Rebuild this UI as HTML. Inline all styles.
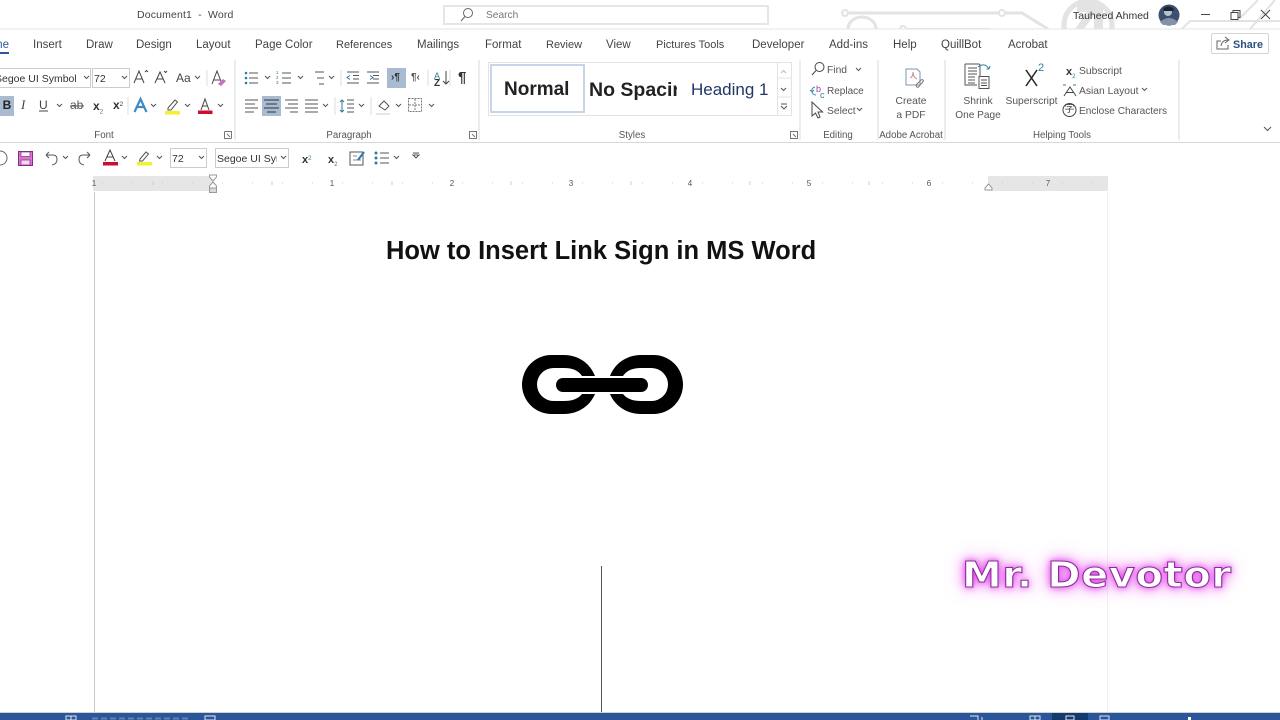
<!DOCTYPE html>
<html><head><meta charset="utf-8"><title>Document1 - Word</title>
<style>
html,body{margin:0;padding:0;width:1280px;height:720px;overflow:hidden;background:#fff;font-family:"Liberation Sans",sans-serif}
.t{position:absolute;white-space:nowrap;font-size:11.500px;line-height:14px;color:#444}
.s{font-size:10.300px;color:#555}
.l{font-size:9.700px;top:128.500px}
.c{transform:translateX(-50%)}
.b{position:absolute;box-sizing:border-box}
svg{position:absolute;left:0;top:0}
</style></head><body>
<!-- backgrounds -->
<div class="b" style="left:0;top:96px;width:14px;height:20px;background:#a9bbd0"></div>
<div class="b" style="left:387px;top:68px;width:19px;height:20px;background:#a9bbd0"></div>
<div class="b" style="left:262px;top:96px;width:19px;height:20px;background:#a9bbd0"></div>
<div class="b" style="left:-6px;top:68px;width:97px;height:20px;border:1px solid #ccc"></div>
<div class="b" style="left:92px;top:68px;width:38px;height:20px;border:1px solid #ccc"></div>
<div class="b" style="left:170px;top:148px;width:37px;height:20px;border:1px solid #ccc"></div>
<div class="b" style="left:215px;top:148px;width:74px;height:20px;border:1px solid #ccc"></div>
<div class="b" style="left:443px;top:5px;width:326px;height:20px;border:2px solid #e6e6e6"></div>
<div class="b" style="left:488px;top:62px;width:304px;height:54px;border:1px solid #e3e3e3"></div>
<div class="b" style="left:490px;top:64px;width:95px;height:49px;border:2.500px solid #c6d6e8"></div>
<div class="b" style="left:777px;top:62px;width:15px;height:54px;border-left:1px solid #e3e3e3"></div>
<div class="b" style="left:1211px;top:33px;width:58px;height:21px;border:1px solid #d4d4d4;border-radius:2px"></div>
<div class="b" style="left:93px;top:176px;width:1015px;height:15px;background:#fff"></div>
<div class="b" style="left:93px;top:176px;width:120px;height:15px;background:#e6e6e6"></div>
<div class="b" style="left:988px;top:176px;width:120px;height:15px;background:#e6e6e6"></div>
<div class="b" style="left:94px;top:192px;width:1px;height:521px;background:#c8c8c8"></div>
<div class="b" style="left:1107px;top:192px;width:1px;height:521px;background:#f0f0f0"></div>
<div class="b" style="left:601px;top:566px;width:1px;height:146px;background:#555"></div>
<div class="b" style="left:0;top:712px;width:1280px;height:1px;background:#d0d0d0"></div>
<div class="b" style="left:0;top:713px;width:1280px;height:7px;background:#2b579a"></div>
<div class="b" style="left:1052px;top:713px;width:36px;height:7px;background:#143a6e"></div>

<svg width="1280" height="720" viewBox="0 0 1280 720" fill="none">
<defs><clipPath id="tb"><rect x="0" y="0" width="1280" height="29"/></clipPath></defs>
<!-- titlebar circuit -->
<g clip-path="url(#tb)">
<g stroke="#e3e3e3" stroke-width="3">
<path d="M849 13H1000"/><circle cx="845" cy="13" r="3" stroke-width="2"/><circle cx="1002" cy="13" r="3" stroke-width="2"/>
<path d="M1005 13H1022L1048 29"/>
<circle cx="1088" cy="25" r="24" stroke-width="5"/>
<path d="M848 29A14 12 0 0 1 876 29" stroke-width="3"/>
<circle cx="903" cy="29" r="3" stroke-width="2"/><path d="M906 29H990" stroke-width="2"/>
<path d="M1182 29L1190 21H1280M1250 29L1275 0M1240 18L1258 0" stroke-width="2"/>
</g>
<path d="M1077 3H1103V29H1094V15L1084 29H1075L1087 12L1077 12Z" fill="#e3e3e3"/>
</g>
<path d="M0 29H1280" stroke="#e4e4e4"/>
<path d="M0 142.500H1280" stroke="#d8d8d8" stroke-width="1"/>
<!-- home underline -->
<path d="M0 53H9" stroke="#2b579a" stroke-width="2"/>
<!-- search icon -->
<g stroke="#666"><circle cx="468" cy="13" r="4.500"/><path d="M465 16.500L461 21"/></g>
<!-- avatar -->
<circle cx="1169" cy="15" r="10.500" fill="#3d4f6e"/>
<circle cx="1168" cy="12" r="4" fill="#b8c0cc"/><path d="M1160 22q9-8 18 0l-3 3h-12z" fill="#8492a8"/><path d="M1163 9q5-5 11 0l-1 2h-9z" fill="#1b2333"/>
<!-- window controls -->
<g stroke="#444"><path d="M1201 14.500H1210"/><path d="M1231 12.500h7v7h-7z M1233 12.500v-2h7v7h-2"/><path d="M1261 10l9 9M1270 10l-9 9"/></g>
<!-- share -->
<g stroke="#666"><path d="M1221 41h-4v8h11v-4"/><path d="M1221 46q1-6 7-6M1225 37l4 3-4 3"/></g>
<!-- separators -->
<g stroke="#dcdcdc"><path d="M235 60V140M479 60V140M800 60V140M878 60V140M945 60V140M1179 60V140" stroke="#d8d8d8"/>
<path d="M207 70V86M128 97V115M341 70V86M428 70V86M450 70V86M335 97V115M371 97V115"/></g>
<!-- chevrons -->
<g stroke="#555" fill="none" stroke-width="1">
<path id="c" d="M84 76l2.500 2.500 2.500-2.500M122 76l2.500 2.500 2.500-2.500M195 76l2.500 2.500 2.500-2.500M57 104l2.500 2.500 2.500-2.500M151 104l2.500 2.500 2.500-2.500M185 104l2.500 2.500 2.500-2.500M218 104l2.500 2.500 2.500-2.500M265 76l2.500 2.500 2.500-2.500M298 76l2.500 2.500 2.500-2.500M329 76l2.500 2.500 2.500-2.500M323 104l2.500 2.500 2.500-2.500M359 104l2.500 2.500 2.500-2.500M396 104l2.500 2.500 2.500-2.500M429 104l2.500 2.500 2.500-2.500M63 156l2.500 2.500 2.500-2.500M122 156l2.500 2.500 2.500-2.500M157 156l2.500 2.500 2.500-2.500M199 156l2.500 2.500 2.500-2.500M281 156l2.500 2.500 2.500-2.500M394 156l2.500 2.500 2.500-2.500M856 68l2.500 2.500 2.500-2.500M857 108l2.500 2.500 2.500-2.500M1142 88l2.500 2.500 2.500-2.500M1264 127l3.500 3.500 3.500-3.500M781 88l2.500 2.500 2.500-2.500M781 104h6M781 106l3 3 3-3"/>
<path d="M781 73l2.500-2.500 2.500 2.500" stroke="#bbb"/>
<path d="M777 78H791M777 97H791" stroke="#e3e3e3"/>
<path d="M413 155h6l-3 3zM413 153h6"/>
</g>
<!-- launchers -->
<g stroke="#777"><path d="M224.500 131.500h7v7M224.500 131.500v7h7M227 134l3 3"/><path d="M469.500 131.500h7v7h-7zM472 134l3 3"/><path d="M790.500 131.500h7v7h-7zM793 134l3 3"/></g>
<!-- grow/shrink font -->
<g stroke="#444" fill="none"><path d="M134 83L139 71L144 83M136 79H142"/><path d="M145 72l1.500-1.500 1.500 1.500"/><path d="M155 83L160 72L165 83M157 79H163"/><path d="M164 71l1.500 1.500 1.500-1.500"/></g>
<!-- clear format -->
<g stroke="#444"><path d="M212 84L217 71L222 84M214 80H220"/></g><path d="M218 84l5-5 3 2-5 5z" fill="#c86dbf"/>
<!-- underline/strike -->
<path d="M70 106H84" stroke="#555"/><path d="M39 111H48" stroke="#444"/>
<!-- text effect A -->
<path d="M134.500 112L140.500 99L146.500 112M136.500 107H144.500" stroke="#3d8ac4" stroke-width="2.200"/>
<!-- highlighter -->
<path d="M168 108l7-8 2.500 2-6.500 8h-3z" stroke="#555"/><rect x="165" y="111" width="15" height="3.500" fill="#f4f02e"/>
<path d="M201 110L205 99L209 110M202.500 106H207.500" stroke="#444"/><rect x="198" y="110.500" width="14.500" height="3.500" fill="#c8102e"/>
<!-- bullets -->
<g stroke="#555"><path d="M249 73H258M249 78H258M249 83H258M282 73H291M282 78H291M282 83H291M315 72H324M317 78H324M319 84H324"/>
<path d="M347 72H359M353 75.500H359M353 79H359M347 83H359M367 72H379M373 75.500H379M373 79H379M367 83H379"/>
<path d="M245 100H258M245 104H255M245 108H258M245 112H254"/>
<path d="M264 100H279M266 104H277M264 108H279M267 112H276" stroke="#333"/>
<path d="M285 100H298M288 104H298M285 108H298M290 112H298"/>
<path d="M305 100H318M305 104H318M305 108H318M305 112H318"/>
<path d="M347 100H354M347 104H354M347 108H354M347 112H354"/>
<path d="M376 114H390" stroke="#ccc"/><path d="M379 106l5-5 5 5-4 4z"/>
<rect x="408.500" y="98.500" width="13" height="13" stroke="#777" stroke-dasharray="2 1"/><path d="M415 99V111M409 105H421" stroke="#777" stroke-dasharray="2 1"/></g>
<g fill="#2d7d9a"><circle cx="246" cy="73" r="1.300"/><circle cx="246" cy="78" r="1.300"/><circle cx="246" cy="83" r="1.300"/></g>
<g stroke="#2d7d9a"><path d="M342 100v12M340 102l2-2 2 2M340 110l2 2 2-2"/><path d="M350 75.500l-3 2 3 2M370 75.500l3 2-3 2"/></g>
<path d="M446 71V84M443 81l3 3 3-3" stroke="#444"/>
<!-- QAT -->
<circle cx="0" cy="158" r="7" stroke="#666"/>
<rect x="18.500" y="151.500" width="14" height="14" fill="#d877d0" stroke="#8a2a86"/><rect x="21" y="152" width="9" height="4.500" fill="#fff" stroke="#8a2a86" stroke-width=".7"/><rect x="21" y="160" width="9" height="5" fill="#f4d9f1" stroke="#8a2a86" stroke-width=".7"/>
<g stroke="#555"><path d="M46 155h7q4 0 4 4.500T52 165M46 155l3-3M46 155l3 3"/><path d="M90 155h-7q-4 0-4 4.500T84 165M90 155l-3-3M90 155l-3 3"/></g>
<path d="M105 161L110 150L115 161M106.500 157H113.500" stroke="#444"/><rect x="103" y="162" width="15" height="3.500" fill="#c8102e"/>
<path d="M140 159l6-7 2.500 2-6 7h-3z" stroke="#555"/><rect x="137" y="162" width="15" height="3.500" fill="#f4f02e"/>
<g stroke="#555"><rect x="350" y="152" width="13" height="13"/><path d="M353 156h4M353 160h8" stroke="#888"/></g><path d="M358 160l6-8" stroke="#2e75b6" stroke-width="2"/>
<g stroke="#555"><path d="M380 153H389M380 158H389M380 163H389"/></g><g fill="#2d7d9a"><circle cx="376" cy="153" r="1.500"/><circle cx="376" cy="158" r="1.500"/><circle cx="376" cy="163" r="1.500"/></g>
<!-- ruler indent markers -->
<g stroke="#999" fill="#fff"><path d="M209.500 175h7v2l-3.500 4-3.500-4z"/><path d="M213 182l3.500 4v2h-7v-2z"/><rect x="209.500" y="188" width="7" height="4.500" fill="#d8d8d8"/><path d="M985 190v-2l3.500-4 3.500 4v2z"/></g>
<!-- ruler ticks -->
<g stroke="#ccc"><path d="M153 181v4M272 181v4M392 181v4M511 181v4M631 181v4M750 181v4M869 181v4"/>
<path stroke-dasharray="1 29" d="M222 183H1100M102 183H212"/></g>
<!-- find/replace/select -->
<g stroke="#444"><circle cx="819.500" cy="67" r="4.500"/><path d="M816 70.500L812 75"/></g>
<path d="M812 103V117L815.500 114L818 119L820 118L818 113H822.500Z" stroke="#444" transform="translate(0,-1)"/>
<path d="M812 92q-1-4 3-5M812 92q1 3 4 3M810 90l2 2 2-2" stroke="#3a8bb5"/>
<!-- create pdf -->
<g stroke="#7d95ad"><path d="M906 69h11l3 3v13h-14z"/><path d="M910 78q3-1 3-6 0 5 4 7" stroke="#c88"/><path d="M916 85l5-5q2-1 2.500 1l-5 6q-2 1-2.500-2z" stroke="#777"/></g>
<!-- shrink one page -->
<g stroke="#555"><path d="M965 64h14l1 1v12M965 64v21h12"/><path d="M968 68h9M968 71h9M968 74h9M968 77h7M968 80h7M968 83h7"/><rect x="979" y="76.500" width="10" height="12"/><path d="M981 80h6M981 83h6M981 85.500h6"/></g>
<path d="M978 67q7-5 11 2M989 69l-2.500 0M989 69l1-3" stroke="#2d7d9a"/>
<!-- superscript -->
<path d="M1026 70L1037 86M1037 70L1026 86" stroke="#222" stroke-width="1.500"/>
<!-- asian layout, enclose -->
<g stroke="#444"><path d="M1064 96L1070 87L1076 96M1066.500 92.500h7"/><path d="M1063 85h3M1073 85h3" stroke="#2d7d9a"/></g>
<circle cx="1069.500" cy="110" r="6.500" stroke="#444"/>
</svg>

<!-- title -->
<span class="t" style="left:137px;top:8px;font-size:10.500px;letter-spacing:.15px">Document1&nbsp; -&nbsp; Word</span>
<span class="t" style="left:486px;top:9px;font-size:10.200px;color:#777">Search</span>
<span class="t" style="left:1073px;top:9px;font-size:10.500px;color:#333">Tauheed Ahmed</span>
<!-- tabs -->
<span class="t" style="left:-10px;top:38px;color:#2b579a;width:19px;overflow:hidden;text-align:right">me</span>
<span class="t" style="left:33px;top:38px">Insert</span>
<span class="t" style="left:86px;top:38px">Draw</span>
<span class="t" style="left:136px;top:38px">Design</span>
<span class="t" style="left:196px;top:38px">Layout</span>
<span class="t" style="left:255px;top:38px">Page Color</span>
<span class="t" style="left:336px;top:38px;font-size:11px">References</span>
<span class="t" style="left:417px;top:38px">Mailings</span>
<span class="t" style="left:485px;top:38px">Format</span>
<span class="t" style="left:546px;top:38px;font-size:11px">Review</span>
<span class="t" style="left:606px;top:38px">View</span>
<span class="t" style="left:656px;top:38px;font-size:11px">Pictures Tools</span>
<span class="t" style="left:752px;top:38px">Developer</span>
<span class="t" style="left:829px;top:38px">Add-ins</span>
<span class="t" style="left:893px;top:38px">Help</span>
<span class="t" style="left:941px;top:38px">QuillBot</span>
<span class="t" style="left:1008px;top:38px">Acrobat</span>
<span class="t" style="left:1233px;top:38px;color:#2b4f7f;font-weight:700;font-size:10.800px">Share</span>
<!-- font -->
<span class="t" style="left:-5px;top:72px;font-size:10.500px;color:#333">Segoe UI Symbol</span>
<span class="t" style="left:94px;top:72px;font-size:10.500px;color:#333">72</span>
<span class="t" style="left:176px;top:71px;font-size:12px">Aa</span>
<span class="t" style="left:0;top:98px;width:14px;text-align:center;font-weight:700;font-size:12px;color:#222">B</span>
<span class="t" style="left:21px;top:98px;font-style:italic;font-family:'Liberation Serif',serif;font-size:13px">I</span>
<span class="t" style="left:39px;top:98px;font-size:12px">U</span>
<span class="t" style="left:70px;top:98px;font-size:12px;color:#555">ab</span>
<span class="t" style="left:93px;top:99px;font-weight:700;font-size:12px;color:#333">x<sub style="font-size:6px;font-weight:400;color:#2d7d9a">2</sub></span>
<span class="t" style="left:113px;top:98px;font-weight:700;font-size:12px;color:#333">x<sup style="font-size:6px;font-weight:400;vertical-align:3px">2</sup></span>
<span class="t s l c" style="left:104px">Font</span>
<span class="t s l c" style="left:349px">Paragraph</span>
<span class="t s l c" style="left:632px">Styles</span>
<span class="t s l c" style="left:838px">Editing</span>
<span class="t s l c" style="left:911px">Adobe Acrobat</span>
<span class="t s l c" style="left:1062px">Helping Tools</span>
<!-- paragraph glyphs -->
<span class="t" style="left:391px;top:71px;font-size:10px;color:#333;font-weight:700">›¶</span>
<span class="t" style="left:411px;top:71px;font-size:10px;color:#555;font-weight:700">¶‹</span>
<span class="t" style="left:458px;top:71px;font-size:15px;color:#333;font-weight:700">¶</span>
<span class="t" style="left:434px;top:69px;font-size:9px;color:#2d7d9a">A</span>
<span class="t" style="left:434px;top:77px;font-size:10px;color:#333;font-weight:700">Z</span>
<span class="t" style="left:276px;top:70px;font-size:4.500px;line-height:5px;color:#2d7d9a;white-space:pre-line">1
2
3</span>
<!-- styles -->
<span class="t" style="left:504px;top:79px;font-size:19px;line-height:22px;font-weight:700;color:#222">Normal</span>
<span style="position:absolute;left:589px;top:79px;width:88px;overflow:hidden;white-space:nowrap;font-size:19.500px;line-height:22px;font-weight:700;color:#222">No Spacing</span>
<span class="t" style="left:691px;top:79px;font-size:17px;line-height:22px;color:#1f3864">Heading 1</span>
<!-- editing -->
<span class="t s" style="left:827px;top:64px">Find</span>
<span class="t" style="left:827px;top:85px;font-size:10px;color:#555">Replace</span>
<span class="t s" style="left:827px;top:105px">Select</span>
<span class="t" style="left:816px;top:84px;font-size:9px;color:#a0409a;line-height:10px">b</span>
<span class="t" style="left:820px;top:90px;font-size:9px;color:#2d7d9a;line-height:10px">c</span>
<!-- acrobat -->
<span class="t s c" style="left:911px;top:95px">Create</span>
<span class="t s c" style="left:911px;top:109px">a PDF</span>
<span class="t s c" style="left:978px;top:95px">Shrink</span>
<span class="t s c" style="left:978px;top:109px;font-size:10.100px">One Page</span>
<span class="t s c" style="left:1031.500px;top:95px">Superscript</span>
<span class="t" style="left:1038px;top:61px;font-size:11px;color:#2d7d9a">2</span>
<span class="t" style="left:1066px;top:65px;font-size:11px;font-weight:700;color:#333">x<sub style="font-size:6px;font-weight:400;color:#2d7d9a">2</sub></span>
<span class="t s" style="left:1079px;top:65px">Subscript</span>
<span class="t s" style="left:1079px;top:85px">Asian Layout</span>
<span class="t" style="left:1079px;top:105px;font-size:10.100px;color:#555">Enclose Characters</span>
<span class="t" style="left:1064.500px;top:103px;font-size:10px;font-family:'Liberation Sans','Noto Sans CJK SC',sans-serif;color:#444">字</span>
<!-- qat text -->
<span class="t" style="left:172px;top:152px;font-size:10.500px;color:#333">72</span>
<span class="t" style="left:217px;top:152px;font-size:10.500px;color:#333;width:60px;overflow:hidden">Segoe UI Symbol</span>
<span class="t" style="left:302px;top:152px;font-weight:700;color:#333;font-size:11px">x<sup style="font-size:6px;font-weight:400;vertical-align:3px;color:#2d7d9a">2</sup></span>
<span class="t" style="left:328px;top:153px;font-weight:700;color:#333;font-size:11px">x<sub style="font-size:6px;font-weight:400;color:#2d7d9a">2</sub></span>
<!-- ruler numbers -->
<span class="t c" style="left:94px;top:177px;font-size:8px;color:#555">1</span>
<span class="t c" style="left:332px;top:177px;font-size:8px;color:#555">1</span>
<span class="t c" style="left:452px;top:177px;font-size:8px;color:#555">2</span>
<span class="t c" style="left:571px;top:177px;font-size:8px;color:#555">3</span>
<span class="t c" style="left:690px;top:177px;font-size:8px;color:#555">4</span>
<span class="t c" style="left:809px;top:177px;font-size:8px;color:#555">5</span>
<span class="t c" style="left:929px;top:177px;font-size:8px;color:#555">6</span>
<span class="t c" style="left:1048px;top:177px;font-size:8px;color:#555">7</span>
<!-- heading -->
<span class="t" style="left:386px;top:235px;font-size:25.500px;line-height:32px;font-weight:700;color:#111">How to Insert Link Sign in MS Word</span>
<!-- link sign -->
<svg width="1280" height="720" viewBox="0 0 1280 720">
<path d="M595 376C590 363 578 355 564 355H551.500A29.500 29.500 0 0 0 551.500 414H564C578 414 590 406 595 394H582C578 399 572 401 564 401H553.500A16.500 16.500 0 0 1 553.500 368H564C572 368 578 370 582 376Z" fill="#000"/>
<path d="M595 376C590 363 578 355 564 355H551.500A29.500 29.500 0 0 0 551.500 414H564C578 414 590 406 595 394H582C578 399 572 401 564 401H553.500A16.500 16.500 0 0 1 553.500 368H564C572 368 578 370 582 376Z" fill="#000" transform="matrix(-1 0 0 1 1205 0)"/>
<rect x="556" y="378" width="92" height="14" rx="7" fill="#000"/>
</svg>
<!-- watermark -->
<span class="t" style="left:962px;top:555px;font-family:'DejaVu Sans',sans-serif;font-weight:700;font-size:36px;line-height:42px;letter-spacing:.6px;color:#fff;-webkit-text-stroke:1px #8a2d9c;text-shadow:0 0 6px #e040e8,0 0 12px #e858ec,0 0 20px #f0a0f4;transform-origin:left center;transform:scaleX(1.108)">Mr. Devotor</span>
<!-- status -->
<svg width="1280" height="720" viewBox="0 0 1280 720" fill="none">
<g stroke="#dfe6f0"><path d="M66 716h5v4h-5zM71 716h5v4h-5zM205 716h10v4h-10z"/><path d="M970 716h8v4M982 717v3M1030 716h5v4h-5zM1035 716h5v4h-5zM1066 716h8v4h-8zM1100 716h9v4h-9z"/></g>
<path d="M1188 717h3v3h-3z" fill="#fff"/>
<path d="M92 718.500H188" stroke="#5f82b4" stroke-width="2" stroke-dasharray="6 3"/>
</svg>
</body></html>
